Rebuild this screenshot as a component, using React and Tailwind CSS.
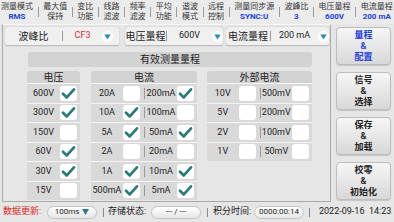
import React from "react";

const TOP = [
  ["测量模式", "RMS", true],
  ["最大值", "保持", false],
  ["变比", "功能", false],
  ["线路", "滤波", false],
  ["频率", "滤波", false],
  ["平均", "功能", false],
  ["谐波", "模式", false],
  ["远程", "控制", false],
  ["测量同步源", "SYNC:U", true],
  ["波峰比", "3", true],
  ["电压量程", "600V", true],
  ["电流量程", "200 mA", true],
];

const Drop = () => (
  <svg width="11" height="11" viewBox="0 0 11 11" className="shrink-0">
    <circle cx="5.5" cy="5.5" r="5.5" fill="#ffffff" />
    <path d="M2.3 3.6 L8.7 3.6 L5.5 8.6 Z" fill="#2a8cbf" />
  </svg>
);

const Check = ({ on }) => (
  <div className="w-[17px] h-[15px] rounded-[3px] bg-white flex items-center justify-center shrink-0">
    {on && (
      <svg width="15" height="13" viewBox="0 0 15 13">
        <path d="M2 6.8 L5.8 10.4 L13 2.4" fill="none" stroke="#2b7b78" strokeWidth="2.8" strokeLinecap="round" strokeLinejoin="round" />
      </svg>
    )}
  </div>
);

const Sep = () => <span className="w-px h-[10px] bg-[#9a9a9a] shrink-0" />;

const RangeBox = ({ label, value, red, w, labelW, valueW }) => (
  <div className={`${w} h-[19px] rounded-[3px] bg-[#f0f0f0] border-b border-[#bdbdbd] shadow-[0_0_1px_rgba(0,0,0,0.35)] flex items-center`}>
    <span className={`${labelW} text-center text-[10px] text-[#222]`}>{label}</span>
    <Sep />
    <span className={`${valueW} text-center text-[9px] ${red ? "text-[#e32a2a]" : "text-[#222]"}`}>{value}</span>
    <Drop />
  </div>
);

const Group = ({ title, w, rows }) => (
  <div className={`${w} rounded-t-[4px] bg-[#d9d9d9] flex flex-col overflow-hidden`}>
    <div className="h-[12px] flex items-center justify-center text-[10px] text-[#222] bg-[#d2d2d2]">{title}</div>
    {rows.map((r, i) => (
      <div key={i} className="h-[19.5px] border-t border-[#f4f4f4] flex items-center pr-[3px]">
        <span className="flex-1 text-center text-[9px] text-[#222] whitespace-nowrap">{r[0]}</span>
        <Check on={r[1]} />
        {r.length > 2 && (
          <>
            <span className="w-px h-[11px] bg-[#9a9a9a] ml-[4px]" />
            <span className="flex-1 text-center text-[9px] text-[#222] whitespace-nowrap">{r[2]}</span>
            <Check on={r[3]} />
          </>
        )}
      </div>
    ))}
  </div>
);

const Btn = ({ a, b, blue }) => (
  <div className={`h-[38px] w-[55px] rounded-[4px] border border-[#bdbdbd] bg-gradient-to-b from-[#f6f6f6] to-[#d8d8d8] shadow-[0_1px_1px_rgba(0,0,0,0.15)] flex flex-col items-center justify-center text-[9px] leading-[11px] font-semibold ${blue ? "text-[#1d3fe0]" : "text-[#222]"}`}>
    <span>{a}</span>
    <span>&amp;</span>
    <span>{b}</span>
  </div>
);

const Pill = ({ children, w }) => (
  <div className={`${w} h-[13px] shrink-0 rounded-full border border-[#c4c4c4] bg-gradient-to-b from-[#ffffff] to-[#e6e6e6] flex items-center justify-center gap-[3px] text-[8px] text-[#222] whitespace-nowrap`}>
    {children}
  </div>
);

export default function App() {
  return (
    <div className="w-[394px] h-[222px] bg-[#e6e6e6] flex flex-col overflow-hidden font-['Roboto','Noto_Sans_CJK_SC',sans-serif]">
      {/* top status */}
      <div className="h-[24px] flex items-center justify-between px-[1px] bg-[#ebebeb]">
        {TOP.map((t, i) => (
          <React.Fragment key={i}>
            {i > 0 && <Sep />}
            <div className="flex flex-col items-center leading-[10px] text-[8px] whitespace-nowrap">
              <span className="text-[#333]">{t[0]}</span>
              <span className={t[2] ? "text-[#1d3fe0] font-bold" : "text-[#333]"}>{t[1]}</span>
            </div>
          </React.Fragment>
        ))}
      </div>

      {/* main */}
      <div className="h-[178px] flex">
        <div className="ml-[2px] w-[329px] border-l border-r border-b border-t border-t-[#f6f6f6] border-[#a9a9a9] bg-[#e6e6e6] flex flex-col pl-[2px] pt-[2px]">
          <div className="flex">
            <RangeBox label="波峰比" value="CF3" red w="w-[114px]" labelW="w-[57px]" valueW="w-[39px]" />
            <RangeBox label="电压量程" value="600V" w="w-[98px] ml-[6px]" labelW="w-[41px]" valueW="w-[45px]" />
            <RangeBox label="电流量程" value="200 mA" w="w-[103px] ml-[3px]" labelW="w-[44px]" valueW="w-[47px]" />
          </div>
          <div className="ml-[23px] mt-[6px] w-[284px] h-[15px] rounded-[3px] bg-[#d3d3d3] flex items-center justify-center text-[10px] text-[#222]">
            有效测量量程
          </div>
          <div className="ml-[22px] mt-[4px] flex items-start">
            <Group
              title="电压"
              w="w-[53px]"
              rows={[
                ["600V", true],
                ["300V", true],
                ["150V", false],
                ["60V", true],
                ["30V", true],
                ["15V", false],
              ]}
            />
            <div className="w-[11px]" />
            <Group
              title="电流"
              w="w-[106px]"
              rows={[
                ["20A", false, "200mA", true],
                ["10A", true, "100mA", false],
                ["5A", true, "50mA", true],
                ["2A", false, "20mA", false],
                ["1A", true, "10mA", true],
                ["500mA", true, "5mA", true],
              ]}
            />
            <div className="w-[10px]" />
            <Group
              title="外部电流"
              w="w-[105px]"
              rows={[
                ["10V", false, "500mV", false],
                ["5V", false, "200mV", false],
                ["2V", false, "100mV", false],
                ["1V", false, "50mV", false],
              ]}
            />
          </div>
        </div>
        <div className="ml-[5px] pt-[3px] flex flex-col gap-[7px]">
          <Btn a="量程" b="配置" blue />
          <Btn a="信号" b="选择" />
          <Btn a="保存" b="加载" />
          <Btn a="校零" b="初始化" />
        </div>
      </div>

      {/* bottom status */}
      <div className="h-[20px] flex items-center text-[9px] text-[#222] whitespace-nowrap">
        <span className="ml-[3px] w-[44px] shrink-0 text-[#e02424]">数据更新:</span>
        <Pill w="w-[50px]">
          <span>100ms</span>
          <svg width="7" height="6" viewBox="0 0 7 6"><path d="M0 0 L7 0 L3.5 6 Z" fill="#2a7a8a" /></svg>
        </Pill>
        <span className="ml-[6px] w-px h-[9px] bg-[#888] shrink-0" />
        <span className="ml-[4px] w-[43px] shrink-0">存储状态:</span>
        <Pill w="w-[50px]">--- / ---</Pill>
        <span className="ml-[6px] w-px h-[9px] bg-[#888] shrink-0" />
        <span className="ml-[5px] w-[41px] shrink-0">积分时间:</span>
        <Pill w="w-[50px]">0000:00:14</Pill>
        <span className="ml-[5px] w-px h-[9px] bg-[#888] shrink-0" />
        <span className="ml-[9px]">2022-09-16&nbsp;&nbsp;14:23</span>
      </div>
    </div>
  );
}
